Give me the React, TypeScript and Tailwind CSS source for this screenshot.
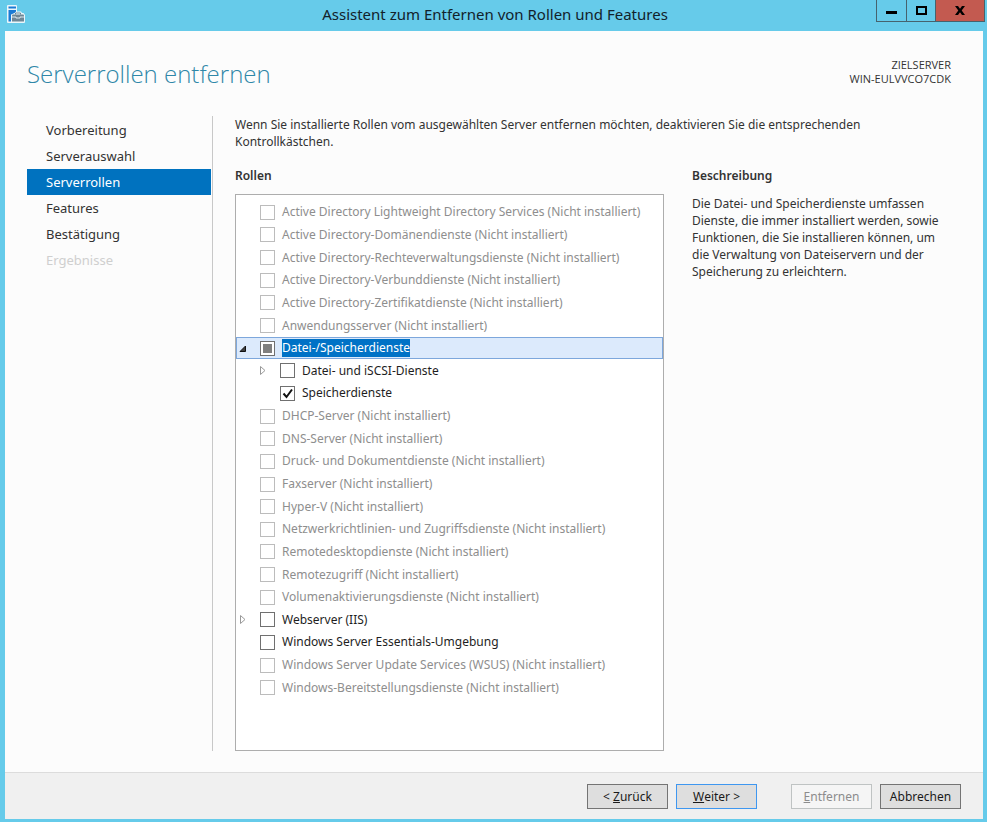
import { ReactNode } from "react";
import clsx from "clsx";

type Role = {
    name: string;
    state?: "checked" | "partial";
    enabled?: boolean;
    child?: boolean;
    selected?: boolean;
    expander?: "open" | "closed";
}

const steps = [
    { name: "Vorbereitung" },
    { name: "Serverauswahl" },
    { name: "Serverrollen", current: true },
    { name: "Features" },
    { name: "Bestätigung" },
    { name: "Ergebnisse", disabled: true },
];

const roles: Role[] = [
    { name: "Active Directory Lightweight Directory Services (Nicht installiert)" },
    { name: "Active Directory-Domänendienste (Nicht installiert)" },
    { name: "Active Directory-Rechteverwaltungsdienste (Nicht installiert)" },
    { name: "Active Directory-Verbunddienste (Nicht installiert)" },
    { name: "Active Directory-Zertifikatdienste (Nicht installiert)" },
    { name: "Anwendungsserver (Nicht installiert)" },
    { name: "Datei-/Speicherdienste", enabled: true, state: "partial", selected: true, expander: "open" },
    { name: "Datei- und iSCSI-Dienste", enabled: true, child: true, expander: "closed" },
    { name: "Speicherdienste", enabled: true, child: true, state: "checked" },
    { name: "DHCP-Server (Nicht installiert)" },
    { name: "DNS-Server (Nicht installiert)" },
    { name: "Druck- und Dokumentdienste (Nicht installiert)" },
    { name: "Faxserver (Nicht installiert)" },
    { name: "Hyper-V (Nicht installiert)" },
    { name: "Netzwerkrichtlinien- und Zugriffsdienste (Nicht installiert)" },
    { name: "Remotedesktopdienste (Nicht installiert)" },
    { name: "Remotezugriff (Nicht installiert)" },
    { name: "Volumenaktivierungsdienste (Nicht installiert)" },
    { name: "Webserver (IIS)", enabled: true, expander: "closed" },
    { name: "Windows Server Essentials-Umgebung", enabled: true },
    { name: "Windows Server Update Services (WSUS) (Nicht installiert)" },
    { name: "Windows-Bereitstellungsdienste (Nicht installiert)" },
];

const ServerIcon = () => (
    <svg width="18" height="18" viewBox="0 0 18 18" aria-hidden="true">
        <path d="M1 0h8a1 1 0 0 1 1 1v5.500h4l1 1.500h1.500L18 10v7a1 1 0 0 1-1 1H1a1 1 0 0 1-1-1V1a1 1 0 0 1 1-1z" fill="#eaf6fb" />
        <path d="M1.500 1.500h7.500v2H1.500zM1.500 5h7.500v1.500L7.500 8 4 9.500V16.500H1.500z" fill="#1a7ad4" />
        <path d="M5 10.500q0-1 1-1h10q1 0 1 1v6H5z" fill="#6f8796" />
        <path d="M8.500 9.500V8h5v1.500" fill="none" stroke="#6f8796" />
        <path d="M5 12h4v1h4v-1h4" fill="none" stroke="#dce8ee" />
    </svg>
);

const TitleBar = () => (
    <header className="flex h-[31px] items-start">
        <div className="w-[109px] pl-[2px] pt-[5px]"><ServerIcon /></div>
        <h1 className="flex-1 pt-[2px] text-center text-[15px] leading-6 text-[#12222b]">
            Assistent zum Entfernen von Rollen und Features
        </h1>
        <div className="-mr-[2px] flex h-[22px] border border-t-0 border-[#46636e]">
            <button aria-label="Minimieren" className="flex w-[29px] items-center justify-center">
                <svg width="11" height="7"><path d="M0 4h11v3H0z" fill="#000" /></svg>
            </button>
            <button aria-label="Maximieren" className="flex w-[29px] items-center justify-center border-l border-[#46636e]">
                <svg width="11" height="9"><path d="M1 1h9v7H1z" fill="none" stroke="#000" strokeWidth="2" /></svg>
            </button>
            <button aria-label="Schließen" className="flex w-[49px] items-center justify-center border-l border-[#46636e] bg-[#c35a50]">
                <svg width="10" height="9">
                    <path d="M0 0h3l2 2.700L7 0h3L6.700 4.400 10 9H7L5 6.200 3 9H0l3.300-4.600z" fill="#000" />
                </svg>
            </button>
        </div>
    </header>
);

const Expander = ({ kind }: { kind?: "open" | "closed" }) => {
    if (!kind) {
        return <span className="w-2 shrink-0" />;
    }
    return (
        <button aria-label={kind === "open" ? "Zuklappen" : "Aufklappen"} className="w-2 shrink-0">
            {kind === "open" ? (
                <svg width="8" height="9"><path d="M6.500 2v5.500H1z" fill="#404040" stroke="#111" /></svg>
            ) : (
                <svg width="8" height="9"><path d="M1.500 .500v8L6 4.500z" fill="#fff" stroke="#999" /></svg>
            )}
        </button>
    );
};

const RoleRow = ({ role }: { role: Role }) => (
    <li
        className={clsx(
            "flex flex-1 items-center border",
            role.child ? "pl-[22px]" : "pl-[2px]",
            role.selected ? "border-[#7da7dc] bg-[#dceafc]" : "border-transparent"
        )}
    >
        <Expander kind={role.expander} />
        <label className={clsx("ml-[13px] flex items-center gap-[7px]", role.enabled ? "text-[#1e1e1e]" : "text-[#8e8e8e]")}>
            <span className="grid size-[15px] place-items-center">
                <input
                    type="checkbox"
                    defaultChecked={role.state === "checked"}
                    disabled={!role.enabled}
                    ref={(el) => {
                        if (el) el.indeterminate = role.state === "partial";
                    }}
                    className={clsx(
                        "col-start-1 row-start-1 size-[15px] appearance-none border bg-white",
                        role.enabled ? "border-[#707070]" : "border-[#bcbcbc]"
                    )}
                />
                {role.state === "partial" && (
                    <span className="pointer-events-none col-start-1 row-start-1 size-[9px] bg-[#7f7f7f]" />
                )}
                {role.state === "checked" && (
                    <svg width="11" height="11" className="pointer-events-none col-start-1 row-start-1">
                        <path d="M1.500 5.500l3 3.500L10 1.500" fill="none" stroke="#111" strokeWidth="2" />
                    </svg>
                )}
            </span>
            <span className={clsx("whitespace-nowrap leading-[18px]", role.selected && "bg-[#0072c6] text-white")}>
                {role.name}
            </span>
        </label>
    </li>
);

type WizardButtonProps = {
    children: ReactNode;
    primary?: boolean;
    disabled?: boolean;
}

const WizardButton = ({ children, primary, disabled }: WizardButtonProps) => (
    <button
        disabled={disabled}
        className={clsx(
            "flex h-[25px] w-[81px] items-center justify-center whitespace-pre border pt-px",
            disabled && "border-[#bfc3c3] bg-[#f5f5f5] text-[#8c8c8c]",
            primary && "border-[#3f97f0] bg-[#dedede] text-[#1a1a1a]",
            !disabled && !primary && "border-[#747474] bg-[#dedede] text-[#1a1a1a]"
        )}
    >
        {children}
    </button>
);

const App = () => {
    return (
        <div className="flex min-h-screen flex-col bg-[#66cbea] pb-[3px] pl-[5px] pr-1 font-['Noto_Sans','Open_Sans',sans-serif] text-[12px] text-[#333]">
            <TitleBar />
            <div className="flex flex-1 flex-col bg-[#fcfcfc]">
                <div className="flex h-[85px] items-start justify-between pl-[22px] pr-8">
                    <h2 className="pt-[26px] font-['Open_Sans','Noto_Sans',sans-serif] text-[24px] font-light leading-[34px] text-[#2f87a8]">
                        Serverrollen entfernen
                    </h2>
                    <div className="pt-[27px] text-right font-['Open_Sans','Noto_Sans',sans-serif] text-[11px] leading-[14px]">
                        <div>ZIELSERVER</div>
                        <div>WIN-EULVVCO7CDK</div>
                    </div>
                </div>
                <div className="flex flex-1 pb-[21px] pl-[22px] pr-8">
                    <nav className="w-[186px] shrink-0 border-r border-[#c8c8c8] pr-px pt-px">
                        <ul>
                            {steps.map((step) => (
                                <li key={step.name}>
                                    <a
                                        href="#"
                                        aria-disabled={step.disabled}
                                        className={clsx(
                                            "block pl-[19px] text-[13px] leading-[26px]",
                                            step.current && "bg-[#0072bf] text-white",
                                            step.disabled && "text-[#cfcfcf]"
                                        )}
                                    >
                                        {step.name}
                                    </a>
                                </li>
                            ))}
                        </ul>
                    </nav>
                    <main className="flex flex-1 flex-col pl-[22px]">
                        <p className="max-w-[660px] leading-[17px]">
                            Wenn Sie installierte Rollen vom ausgewählten Server entfernen möchten, deaktivieren Sie die entsprechenden Kontrollkästchen.
                        </p>
                        <div className="flex flex-1 gap-7 pt-[17px]">
                            <section className="flex w-[429px] shrink-0 flex-col">
                                <h3 className="font-semibold leading-[18px]">Rollen</h3>
                                <div className="mt-[9px] flex-1 border border-[#adadad] bg-white pt-[6px]">
                                    <ul className="flex h-[498px] flex-col">
                                        {roles.map((role) => (
                                            <RoleRow key={role.name} role={role} />
                                        ))}
                                    </ul>
                                </div>
                            </section>
                            <section className="min-w-0 flex-1">
                                <h3 className="font-semibold leading-[18px]">Beschreibung</h3>
                                <p className="mt-[10px] max-w-[252px] leading-[17px]">
                                    Die Datei- und Speicherdienste umfassen Dienste, die immer installiert werden, sowie Funktionen, die Sie installieren können, um die Verwaltung von Dateiservern und der Speicherung zu erleichtern.
                                </p>
                            </section>
                        </div>
                    </main>
                </div>
                <footer className="flex h-[47px] justify-end gap-2 border-t border-[#dcdcdc] bg-[#f0f0f0] pr-[22px] pt-[11px]">
                    <WizardButton>{"< "}<u>Z</u>urück</WizardButton>
                    <WizardButton primary><u>W</u>eiter{" >"}</WizardButton>
                    <div className="ml-[26px] flex gap-2">
                        <WizardButton disabled><u>E</u>ntfernen</WizardButton>
                        <WizardButton>Abbrechen</WizardButton>
                    </div>
                </footer>
            </div>
        </div>
    );
}

export default App;
